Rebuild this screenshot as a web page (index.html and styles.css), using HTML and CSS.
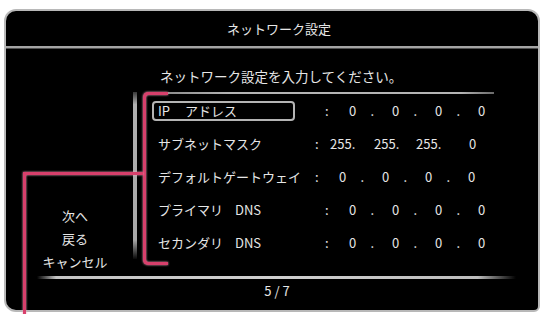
FILE: index.html
```html
<!DOCTYPE html>
<html lang="ja">
<head>
<meta charset="utf-8">
<title>ネットワーク設定</title>
<link rel="stylesheet" href="styles.css">
</head>
<body>
<div class="panel">
  <div class="header">ネットワーク設定</div>
  <div class="main">
    <div class="menu">
      <div class="menu-item">次へ</div>
      <div class="menu-item">戻る</div>
      <div class="menu-item">キャンセル</div>
    </div>
    <div class="content">
      <div class="subtitle">ネットワーク設定を入力してください。</div>
      <div class="list">
        <div class="rule"></div>
        <div class="row">
          <div class="label selected">IP<span class="gap-wide">アドレス</span></div>
          <div class="val ip">
            <span>:</span><span>0</span><span>.</span><span>0</span><span>.</span><span>0</span><span>.</span><span>0</span>
          </div>
        </div>
        <div class="row">
          <div class="label">サブネットマスク</div>
          <div class="val mask">
            <span>:</span><span>255.</span><span>255.</span><span>255.</span><span>0</span>
          </div>
        </div>
        <div class="row">
          <div class="label">デフォルトゲートウェイ</div>
          <div class="val ip near">
            <span>:</span><span>0</span><span>.</span><span>0</span><span>.</span><span>0</span><span>.</span><span>0</span>
          </div>
        </div>
        <div class="row">
          <div class="label">プライマリ<span class="gap">DNS</span></div>
          <div class="val ip">
            <span>:</span><span>0</span><span>.</span><span>0</span><span>.</span><span>0</span><span>.</span><span>0</span>
          </div>
        </div>
        <div class="row">
          <div class="label">セカンダリ<span class="gap">DNS</span></div>
          <div class="val ip">
            <span>:</span><span>0</span><span>.</span><span>0</span><span>.</span><span>0</span><span>.</span><span>0</span>
          </div>
        </div>
      </div>
    </div>
  </div>
  <div class="footer">
    <div class="footer-rule"></div>
    <div class="page">5 / 7</div>
  </div>
  <div class="bracket"></div>
  <div class="callout"></div>
</div>
</body>
</html>
```

FILE: styles.css
```css
html, body {
  margin: 0;
  padding: 0;
  background: #ffffff;
}

body {
  width: 544px;
  height: 314px;
  overflow: hidden;
  font-family: "Noto Sans CJK JP", "Noto Sans", sans-serif;
  color: #e6e6e6;
  font-size: 13px;
}

.panel {
  position: relative;
  box-sizing: border-box;
  margin: 9px 0 0 4px;
  width: 536px;
  height: 303px;
  border: 2px solid #b8b8b8;
  border-radius: 12px 12px 6px 12px;
  background: #000;
  display: flex;
  flex-direction: column;
}

.header {
  height: 35px;
  display: flex;
  align-items: center;
  justify-content: center;
  padding-left: 14px;
  font-size: 13px;
  line-height: 18px;
  border-bottom: 2px solid #a4a4a4;
  box-shadow: 0 1px 0 #505050;
  border-radius: 10px 10px 0 0;
}

.main {
  display: flex;
  height: 228px;
}

.menu {
  width: 127px;
  box-sizing: border-box;
  padding: 0 0 3px 11px;
  display: flex;
  flex-direction: column;
  justify-content: flex-end;
  align-items: center;
}

.menu-item {
  line-height: 23px;
  font-size: 13px;
}

.content {
  flex: 1;
  display: flex;
  flex-direction: column;
}

.subtitle {
  padding: 19px 0 0 27px;
  line-height: 18px;
  height: 18px;
  margin-bottom: 7px;
  font-size: 13.5px;
}

.list {
  border-left: 4px solid #999;
  border-image: linear-gradient(to bottom, rgba(150,150,150,0.3), #b0b0b0 8%, #a8a8a8 88%, rgba(120,120,120,0)) 1;
  height: 167px;
}

.rule {
  margin-left: 28px;
  width: 329px;
  height: 2px;
  background: linear-gradient(to right, #8c8c8c, #b4b4b4 20%, #b4b4b4 90%, #6a6a6a);
}

.row {
  height: 33px;
  display: flex;
  align-items: center;
  padding-left: 15px;
}

.label {
  box-sizing: border-box;
  width: 143px;
  height: 20px;
  line-height: 16px;
  padding: 0 4px;
  border: 2px solid transparent;
  border-radius: 4px;
  white-space: nowrap;
  margin-right: 30px;
}

.label.selected {
  border-color: #b4b4b4;
}

.gap-wide {
  margin-left: 15px;
}

.gap {
  margin-left: 12px;
}

.val {
  display: grid;
  line-height: 18px;
}

.val.ip {
  grid-template-columns: 24px repeat(7, 21.5px);
}

.val.near {
  margin-left: -10px;
}

.val.mask {
  margin-left: -10px;
  grid-template-columns: 15px 44px 42px 53px auto;
}

.footer {
  flex: 1;
  display: flex;
  flex-direction: column;
}

.footer-rule {
  height: 3px;
  margin: 0 22px 0 31px;
  background: linear-gradient(to right, rgba(200,200,200,0), #c4c4c4 4%, #cfcfcf 50%, #bdbdbd 92%, rgba(200,200,200,0));
}

.page {
  padding: 3px 0 0 10px;
  text-align: center;
  line-height: 18px;
  font-size: 13px;
}

.bracket {
  position: absolute;
  left: 137px;
  top: 81px;
  width: 22px;
  height: 167px;
  border: 3px solid #d8406c;
  border-right: none;
  border-radius: 5px 0 0 5px;
  filter: drop-shadow(0 0 1px #f4a4bc);
}

.callout {
  position: absolute;
  left: 17px;
  top: 161px;
  width: 117px;
  height: 150px;
  border-top: 3px solid #d8406c;
  border-left: 3px solid #d8406c;
  filter: drop-shadow(0 0 1px #f4a4bc);
}
```
